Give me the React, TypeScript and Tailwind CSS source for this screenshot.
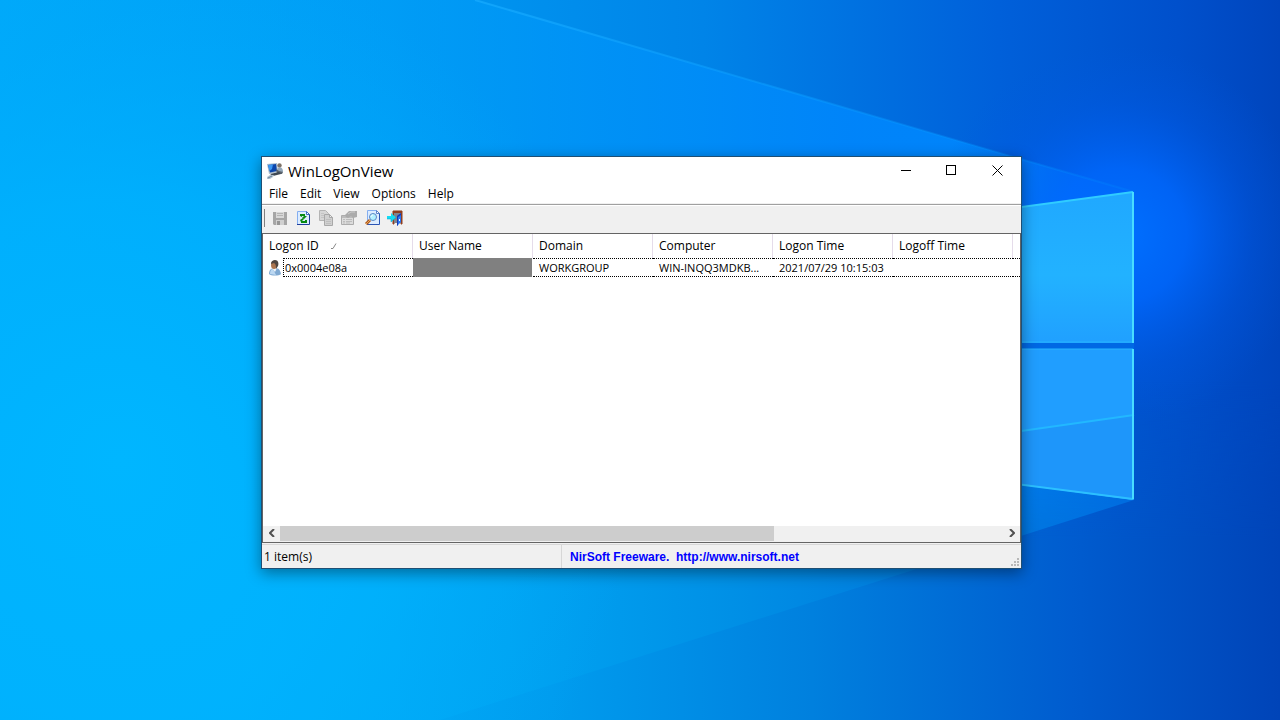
import React from 'react';

interface Column {
  label: string;
  width: string;
  sorted?: boolean;
}

const MENUS = ['File', 'Edit', 'View', 'Options', 'Help'];

const COLUMNS: Column[] = [
  { label: 'Logon ID', width: 'w-[150px]', sorted: true },
  { label: 'User Name', width: 'w-[120px]' },
  { label: 'Domain', width: 'w-[120px]' },
  { label: 'Computer', width: 'w-[120px]' },
  { label: 'Logon Time', width: 'w-[120px]' },
  { label: 'Logoff Time', width: 'w-[120px]' },
];

function Wallpaper() {
  return (
    <svg
      className="absolute inset-0 h-full w-full"
      viewBox="0 0 1280 720"
      preserveAspectRatio="xMidYMid slice"
      aria-hidden="true"
    >
      <defs>
        <linearGradient id="base" x1="0" y1="0" x2="1280" y2="0" gradientUnits="userSpaceOnUse">
          <stop offset="0" stopColor="#00a6f8" />
          <stop offset="0.3" stopColor="#009af2" />
          <stop offset="0.55" stopColor="#0084e8" />
          <stop offset="0.78" stopColor="#0060da" />
          <stop offset="0.92" stopColor="#0050cc" />
          <stop offset="1" stopColor="#0045bd" />
        </linearGradient>
        <linearGradient id="beam" x1="0" y1="0" x2="1134" y2="0" gradientUnits="userSpaceOnUse">
          <stop offset="0" stopColor="#00acfc" stopOpacity="0.5" />
          <stop offset="0.4" stopColor="#009cf8" stopOpacity="0.6" />
          <stop offset="0.75" stopColor="#0086fc" stopOpacity="0.9" />
          <stop offset="0.9" stopColor="#0088ff" stopOpacity="0.9" />
          <stop offset="1" stopColor="#0078ff" stopOpacity="0.3" />
        </linearGradient>
        <radialGradient id="cyan" cx="120" cy="460" r="520" gradientUnits="userSpaceOnUse">
          <stop offset="0" stopColor="#00b6ff" />
          <stop offset="0.5" stopColor="#00b2fe" stopOpacity="0.75" />
          <stop offset="1" stopColor="#00a8f8" stopOpacity="0" />
        </radialGradient>
        <radialGradient id="glow" cx="1120" cy="235" r="190" gradientUnits="userSpaceOnUse">
          <stop offset="0" stopColor="#0070ff" />
          <stop offset="0.35" stopColor="#0068ff" stopOpacity="0.8" />
          <stop offset="0.7" stopColor="#005cec" stopOpacity="0.3" />
          <stop offset="1" stopColor="#0058e0" stopOpacity="0" />
        </radialGradient>
        <linearGradient id="lowBeam" x1="240" y1="0" x2="1134" y2="0" gradientUnits="userSpaceOnUse">
          <stop offset="0" stopColor="#00b2fc" />
          <stop offset="0.3" stopColor="#00a4f2" />
          <stop offset="0.55" stopColor="#0090e6" />
          <stop offset="0.8" stopColor="#0078dc" />
          <stop offset="1" stopColor="#0070e0" />
        </linearGradient>
        <linearGradient id="lowBase" x1="240" y1="0" x2="1280" y2="0" gradientUnits="userSpaceOnUse">
          <stop offset="0" stopColor="#00b0fa" />
          <stop offset="0.3" stopColor="#009cee" />
          <stop offset="0.55" stopColor="#0080de" />
          <stop offset="0.8" stopColor="#005ccf" />
          <stop offset="1" stopColor="#0044b8" />
        </linearGradient>
        <linearGradient id="fadeDown" x1="0" y1="380" x2="0" y2="540" gradientUnits="userSpaceOnUse">
          <stop offset="0" stopColor="#000" />
          <stop offset="1" stopColor="#fff" />
        </linearGradient>
        <mask id="lowMask">
          <rect width="1280" height="720" fill="url(#fadeDown)" />
        </mask>
        <linearGradient id="paneTop" x1="0" y1="192" x2="0" y2="343" gradientUnits="userSpaceOnUse">
          <stop offset="0" stopColor="#20a8ff" />
          <stop offset="0.55" stopColor="#22b2ff" />
          <stop offset="1" stopColor="#20a0ff" />
        </linearGradient>
        <linearGradient id="ray" x1="475" y1="0" x2="1134" y2="192" gradientUnits="userSpaceOnUse">
          <stop offset="0" stopColor="#18acff" stopOpacity="0.7" />
          <stop offset="1" stopColor="#0090ff" stopOpacity="0.2" />
        </linearGradient>
      </defs>
      <rect width="1280" height="720" fill="url(#base)" />
      <path d="M0 0H475L1134 192V500L440 720H0Z" fill="url(#beam)" />
      <g mask="url(#lowMask)">
        <rect width="1280" height="720" fill="url(#lowBase)" />
        <path d="M0 0H1134V500L440 720H0Z" fill="url(#lowBeam)" />
      </g>
      <rect width="1280" height="720" fill="url(#cyan)" />
      <rect width="1280" height="720" fill="url(#glow)" />
      <path d="M0 567L400 516V720H0Z" fill="#00b8ff" fillOpacity="0.15" />
      <path d="M475 0L1134 192" stroke="url(#ray)" strokeWidth="2" />

      <path d="M1000 342H1134V350H1000Z" fill="#0068e4" />
      <path d="M1000 210L1134 192V343H1000Z" fill="url(#paneTop)" />
      <path d="M1000 349H1134V500L1000 482Z" fill="#209eff" />
      <path d="M1000 434L1134 415V500L1000 482Z" fill="#1e96fa" />
      <path d="M1000 434L1134 415" stroke="#22b8ff" strokeWidth="2" />
      <path d="M1000 342H1133M1000 349H1133" stroke="#24b4ff" strokeWidth="1" />
      <path d="M1000 210L1133 192" stroke="#30ccff" strokeWidth="2" fill="none" />
      <path d="M1000 482L1133 499" stroke="#2cc0ff" strokeWidth="2" fill="none" />
      <path d="M1133 192V343M1133 349V499" stroke="#48dcff" strokeWidth="2" />
    </svg>
  );
}

function AppIcon() {
  return (
    <svg className="size-4" viewBox="0 0 16 16" aria-hidden="true">
      <path d="M0 1L10 0L11 9L2 11Z" fill="#a9bccd" />
      <path d="M1 2L9 1L10 8L3 9.5Z" fill="#0b46ac" />
      <path d="M1 2L6 1.5L5 6L2.5 8Z" fill="#3c98f2" />
      <circle cx="12.5" cy="2.5" r="2.2" fill="#7d7268" />
      <path d="M10 8C10 5 11 4.5 13 4.5C15 4.5 16 6 16 9L12 10Z" fill="#94a8ba" />
      <path d="M9 6L12 8L16 9L15 11L10 11Z" fill="#59636e" />
      <path d="M3 11L12 9L14 11L6 13Z" fill="#3e4853" />
      <path d="M0 14L3 12H7L6 14L3 16H0Z" fill="#b4c4d2" />
      <path d="M1 15L5 13" stroke="#6d8498" />
    </svg>
  );
}

function UserIcon() {
  return (
    <svg className="size-4 shrink-0" viewBox="0 0 16 16" aria-hidden="true">
      <path d="M2 14C2 10 4 8 8 8C12 8 13 10 14 14C12 16 4 16 2 14Z" fill="#7fa9d2" />
      <path d="M3 14C3 11 4 9 6 9L9 15Z" fill="#bcd8f2" />
      <path d="M5 8L8 12L10 8Z" fill="#f2f6fa" />
      <ellipse cx="7" cy="5" rx="3" ry="4" fill="#ab7550" />
      <path d="M4 4C4 1 6 0 8 0C11 0 12 3 11 6L9 9C9 6 9 4 7 3L4 4Z" fill="#4d4540" />
    </svg>
  );
}

function SaveIcon() {
  return (
    <svg className="size-4" viewBox="0 0 16 16" aria-hidden="true">
      <path d="M1 2H15V15H2L1 14Z" fill="#a6a6a6" />
      <path d="M4 2H12V8H4Z" fill="#d8d8d8" />
      <path d="M5 3.5H11M5 5.5H11" stroke="#b4b4b4" />
      <path d="M4 10H12V15H4Z" fill="#d0d0d0" />
      <path d="M5 11H8V15H5Z" fill="#969696" />
    </svg>
  );
}

function RefreshIcon() {
  return (
    <svg className="size-4" viewBox="0 0 16 16" aria-hidden="true">
      <path d="M2.5 1.5H11.5L14.5 4.5V14.5H2.5Z" fill="#dcecff" />
      <path d="M2.5 14.5V1.5H11.5" stroke="#84aef0" fill="none" />
      <path d="M14.5 4V14.5H2" stroke="#1f3f9c" fill="none" />
      <path d="M11.5 1.5V4.5H14.5Z" stroke="#3f6cc4" fill="#ffffff" />
      <path d="M5 6V4H10V6H12L9 9L7 8L9 6H7V7Z" fill="#078a12" />
      <path d="M5 10L8 8L9 9L7 11H10V10H12V13H6V12Z" fill="#078a12" />
    </svg>
  );
}

function CopyIcon() {
  return (
    <svg className="size-4" viewBox="0 0 16 16" aria-hidden="true">
      <path d="M1.5 .5H7.5L10.5 3.5V10.5H1.5Z" fill="#d6d6d6" stroke="#b4b4b4" />
      <path d="M3 3.5H6M3 5.5H6M3 7.5H6" stroke="#c4c4c4" />
      <path d="M6.5 4.5H11.5L14.5 7.5V15.5H6.5Z" fill="#d0d0d0" stroke="#a8a8a8" />
      <path d="M11.5 4.5V7.5H14.5Z" fill="#eeeeee" stroke="#a8a8a8" />
      <path d="M8 9.5H13M8 11.5H13M8 13.5H13" stroke="#bebebe" />
    </svg>
  );
}

function PropertiesIcon() {
  return (
    <svg className="size-4" viewBox="0 0 16 16" aria-hidden="true">
      <path d="M.5 5.5H12.5V14.5H.5Z" fill="#dcdcdc" stroke="#acacac" />
      <path d="M1 6H12V8H1Z" fill="#bcbcbc" />
      <path d="M2 9.5H4M5 9.5H11M2 11.5H4M5 11.5H11M2 13H4M5 13H9" stroke="#bcbcbc" />
      <path d="M4 5L8 1H16V7L12 8L10 6L7 8L5 7Z" fill="#ababab" />
      <path d="M7 4L10 2H14" stroke="#cccccc" fill="none" />
    </svg>
  );
}

function FindIcon() {
  return (
    <svg className="size-4" viewBox="0 0 16 16" aria-hidden="true">
      <path d="M3.5 .5H12.5L15.5 3.5V14.5H3.5Z" fill="#dcecff" />
      <path d="M3.5 14.5V.5H12.5" stroke="#84aef0" fill="none" />
      <path d="M15.5 3V14.5H3" stroke="#2c55b4" fill="none" />
      <path d="M12.5 .5V3.5H15.5Z" stroke="#5b83cc" fill="#ffffff" />
      <path d="M6 10L2 14" stroke="#b05c1c" strokeWidth="3" />
      <path d="M6 10L2 14" stroke="#e8a45c" />
      <circle cx="9" cy="7" r="3.5" fill="#b4f0ff" stroke="#5a86c4" />
      <path d="M7 7C7 6 8 5 9 5" stroke="#ffffff" fill="none" />
    </svg>
  );
}

function ExitIcon() {
  return (
    <svg className="size-4" viewBox="0 0 16 16" aria-hidden="true">
      <path d="M6 1H15V14H14V3H7V14H6Z" fill="#8f3f20" stroke="#8f3f20" />
      <path d="M7 3H14V13H7Z" fill="#80848e" />
      <path d="M10 6L14 3V12L10 16Z" fill="#2878f8" />
      <path d="M10 6L14 3V5L11 7V15L10 16Z" fill="#1838b0" />
      <path d="M12 9H13V11H12Z" fill="#ffffff" />
      <path d="M0 6H4V3L9 7.5L4 12V9H0Z" fill="#14dcf4" />
      <path d="M0 9H4V12L9 7.5" stroke="#0898c4" strokeWidth=".5" fill="none" />
    </svg>
  );
}

const TOOLS = [
  { name: 'Save', icon: <SaveIcon />, disabled: true },
  { name: 'Refresh', icon: <RefreshIcon /> },
  { name: 'Copy', icon: <CopyIcon />, disabled: true },
  { name: 'Properties', icon: <PropertiesIcon />, disabled: true },
  { name: 'Find', icon: <FindIcon /> },
  { name: 'Exit', icon: <ExitIcon /> },
];

function TitleBar() {
  return (
    <header className="flex h-7 items-center bg-white pb-px pl-[5px]">
      <AppIcon />
      <h1 className="flex-1 pl-[5px] text-[15px] leading-5">WinLogOnView</h1>
      <button type="button" aria-label="Minimize" className="flex h-[27px] w-[45px] items-center justify-center">
        <svg className="size-[11px]" viewBox="0 0 11 11" shapeRendering="crispEdges">
          <path d="M0 5.5H10" stroke="#000" />
        </svg>
      </button>
      <button type="button" aria-label="Maximize" className="flex h-[27px] w-[45px] items-center justify-center">
        <svg className="size-[11px]" viewBox="0 0 11 11" shapeRendering="crispEdges">
          <path d="M.5 .5H9.5V9.5H.5Z" stroke="#000" fill="none" />
        </svg>
      </button>
      <button type="button" aria-label="Close" className="flex h-[27px] w-[47px] items-center justify-center">
        <svg className="size-[11px]" viewBox="0 0 11 11">
          <path d="M.5 .5L10.5 10.5M10.5 .5L.5 10.5" stroke="#000" />
        </svg>
      </button>
    </header>
  );
}

function LogonTable() {
  return (
    <table className="w-full table-fixed border-separate border-spacing-0 text-left">
      <thead>
        <tr className="h-6">
          {COLUMNS.map((col) => (
            <th
              key={col.label}
              scope="col"
              className={`${col.width} border-r border-[#e5dcea] p-0 pl-1.5 text-[12px] leading-4 font-normal`}
            >
              <span className="flex items-center gap-3">
                {col.label}
                {col.sorted && (
                  <svg className="h-1.5 w-1.5" viewBox="0 0 6 6" aria-hidden="true">
                    <path d="M0 5.5H2L5 .5" stroke="#8a8a8a" fill="none" />
                  </svg>
                )}
              </span>
            </th>
          ))}
          <td className="p-0" />
        </tr>
      </thead>
      <tbody>
        <tr className="h-[19px] text-[11px] leading-[17px]">
          <td className="p-0">
            <div className="flex items-center pl-1">
              <UserIcon />
              <span className="flex-1 border-y border-l border-dotted border-black pl-px">0x0004e08a</span>
            </div>
          </td>
          <td className="border-r border-white bg-[#808080] p-0" aria-label="Hidden" />
          <td className="border-y border-dotted border-black p-0 pl-1.5">WORKGROUP</td>
          <td className="truncate border-y border-dotted border-black p-0 px-1.5">WIN-INQQ3MDKB...</td>
          <td className="border-y border-dotted border-black p-0 pl-1.5">2021/07/29 10:15:03</td>
          <td className="border-y border-dotted border-black p-0" />
          <td className="border-y border-dotted border-black p-0" />
        </tr>
      </tbody>
    </table>
  );
}

function ScrollBar() {
  return (
    <div className="flex h-4 items-stretch bg-[#f0f0f0]">
      <button type="button" aria-label="Scroll left" className="flex w-[17px] items-center justify-center pb-0.5">
        <svg className="h-2 w-1.5" viewBox="0 0 6 8">
          <path d="M5 0L1 4L5 8" stroke="#505050" strokeWidth="2" fill="none" />
        </svg>
      </button>
      <div className="flex-1 pb-px">
        <div className="h-full w-[494px] bg-[#cdcdcd]" />
      </div>
      <button type="button" aria-label="Scroll right" className="flex w-[17px] items-center justify-center pb-0.5">
        <svg className="h-2 w-1.5" viewBox="0 0 6 8">
          <path d="M1 0L5 4L1 8" stroke="#505050" strokeWidth="2" fill="none" />
        </svg>
      </button>
    </div>
  );
}

export default function App() {
  return (
    <div className="relative grid min-h-screen place-items-center overflow-hidden bg-[#0090f0] pt-[5px] pl-[3px] font-['Open_Sans','Noto_Sans',sans-serif] text-black">
      <Wallpaper />

      <main className="relative flex w-[761px] max-w-full flex-col border border-[#1f4f74] bg-[#f0f0f0] shadow-[0_4px_14px_rgba(0,0,0,0.4)]">
        <TitleBar />

        <nav className="flex h-[18px] items-center bg-white pl-px">
          {MENUS.map((menu) => (
            <button key={menu} type="button" className="px-1.5 text-[12px] leading-4">
              {menu}
            </button>
          ))}
        </nav>

        <div className="flex h-[30px] flex-col">
          <div className="h-0.5 border-b border-[#a0a0a0] bg-[#f0f0f0]" />
          <div className="h-px bg-white" />
          <div role="toolbar" className="flex h-6 items-center pl-0.5">
            <div className="h-[18px] w-px bg-[#808080]" />
            <div className="flex pl-[3px]">
              {TOOLS.map((tool) => (
                <button
                  key={tool.name}
                  type="button"
                  aria-label={tool.name}
                  disabled={tool.disabled}
                  className="flex h-[22px] w-[23px] items-center justify-center"
                >
                  {tool.icon}
                </button>
              ))}
            </div>
          </div>
        </div>

        <section className="flex h-[310px] flex-col border border-[#646464] bg-white">
          <div className="flex-1 overflow-hidden">
            <LogonTable />
          </div>
          <ScrollBar />
        </section>

        <footer className="mt-px flex h-6 items-stretch border-t border-[#d7d7d7] text-[12px] leading-4">
          <div className="flex w-[300px] items-center border-r border-[#d7d7d7] pt-px pl-0.5">1 item(s)</div>
          <div className="flex flex-1 items-center pt-px pl-2">
            <a
              href="http://www.nirsoft.net"
              className="font-['Liberation_Sans',Arial,sans-serif] font-bold whitespace-pre text-[#0000ff]"
            >
              {'NirSoft Freeware.  http://www.nirsoft.net'}
            </a>
          </div>
          <svg className="mr-0.5 mb-0.5 size-2 self-end" viewBox="0 0 8 8" fill="#b8b8b8" aria-hidden="true">
            <path d="M6 0h2v2H6zM3 3h2v2H3zM6 3h2v2H6zM0 6h2v2H0zM3 6h2v2H3zM6 6h2v2H6z" />
          </svg>
        </footer>
      </main>
    </div>
  );
}
